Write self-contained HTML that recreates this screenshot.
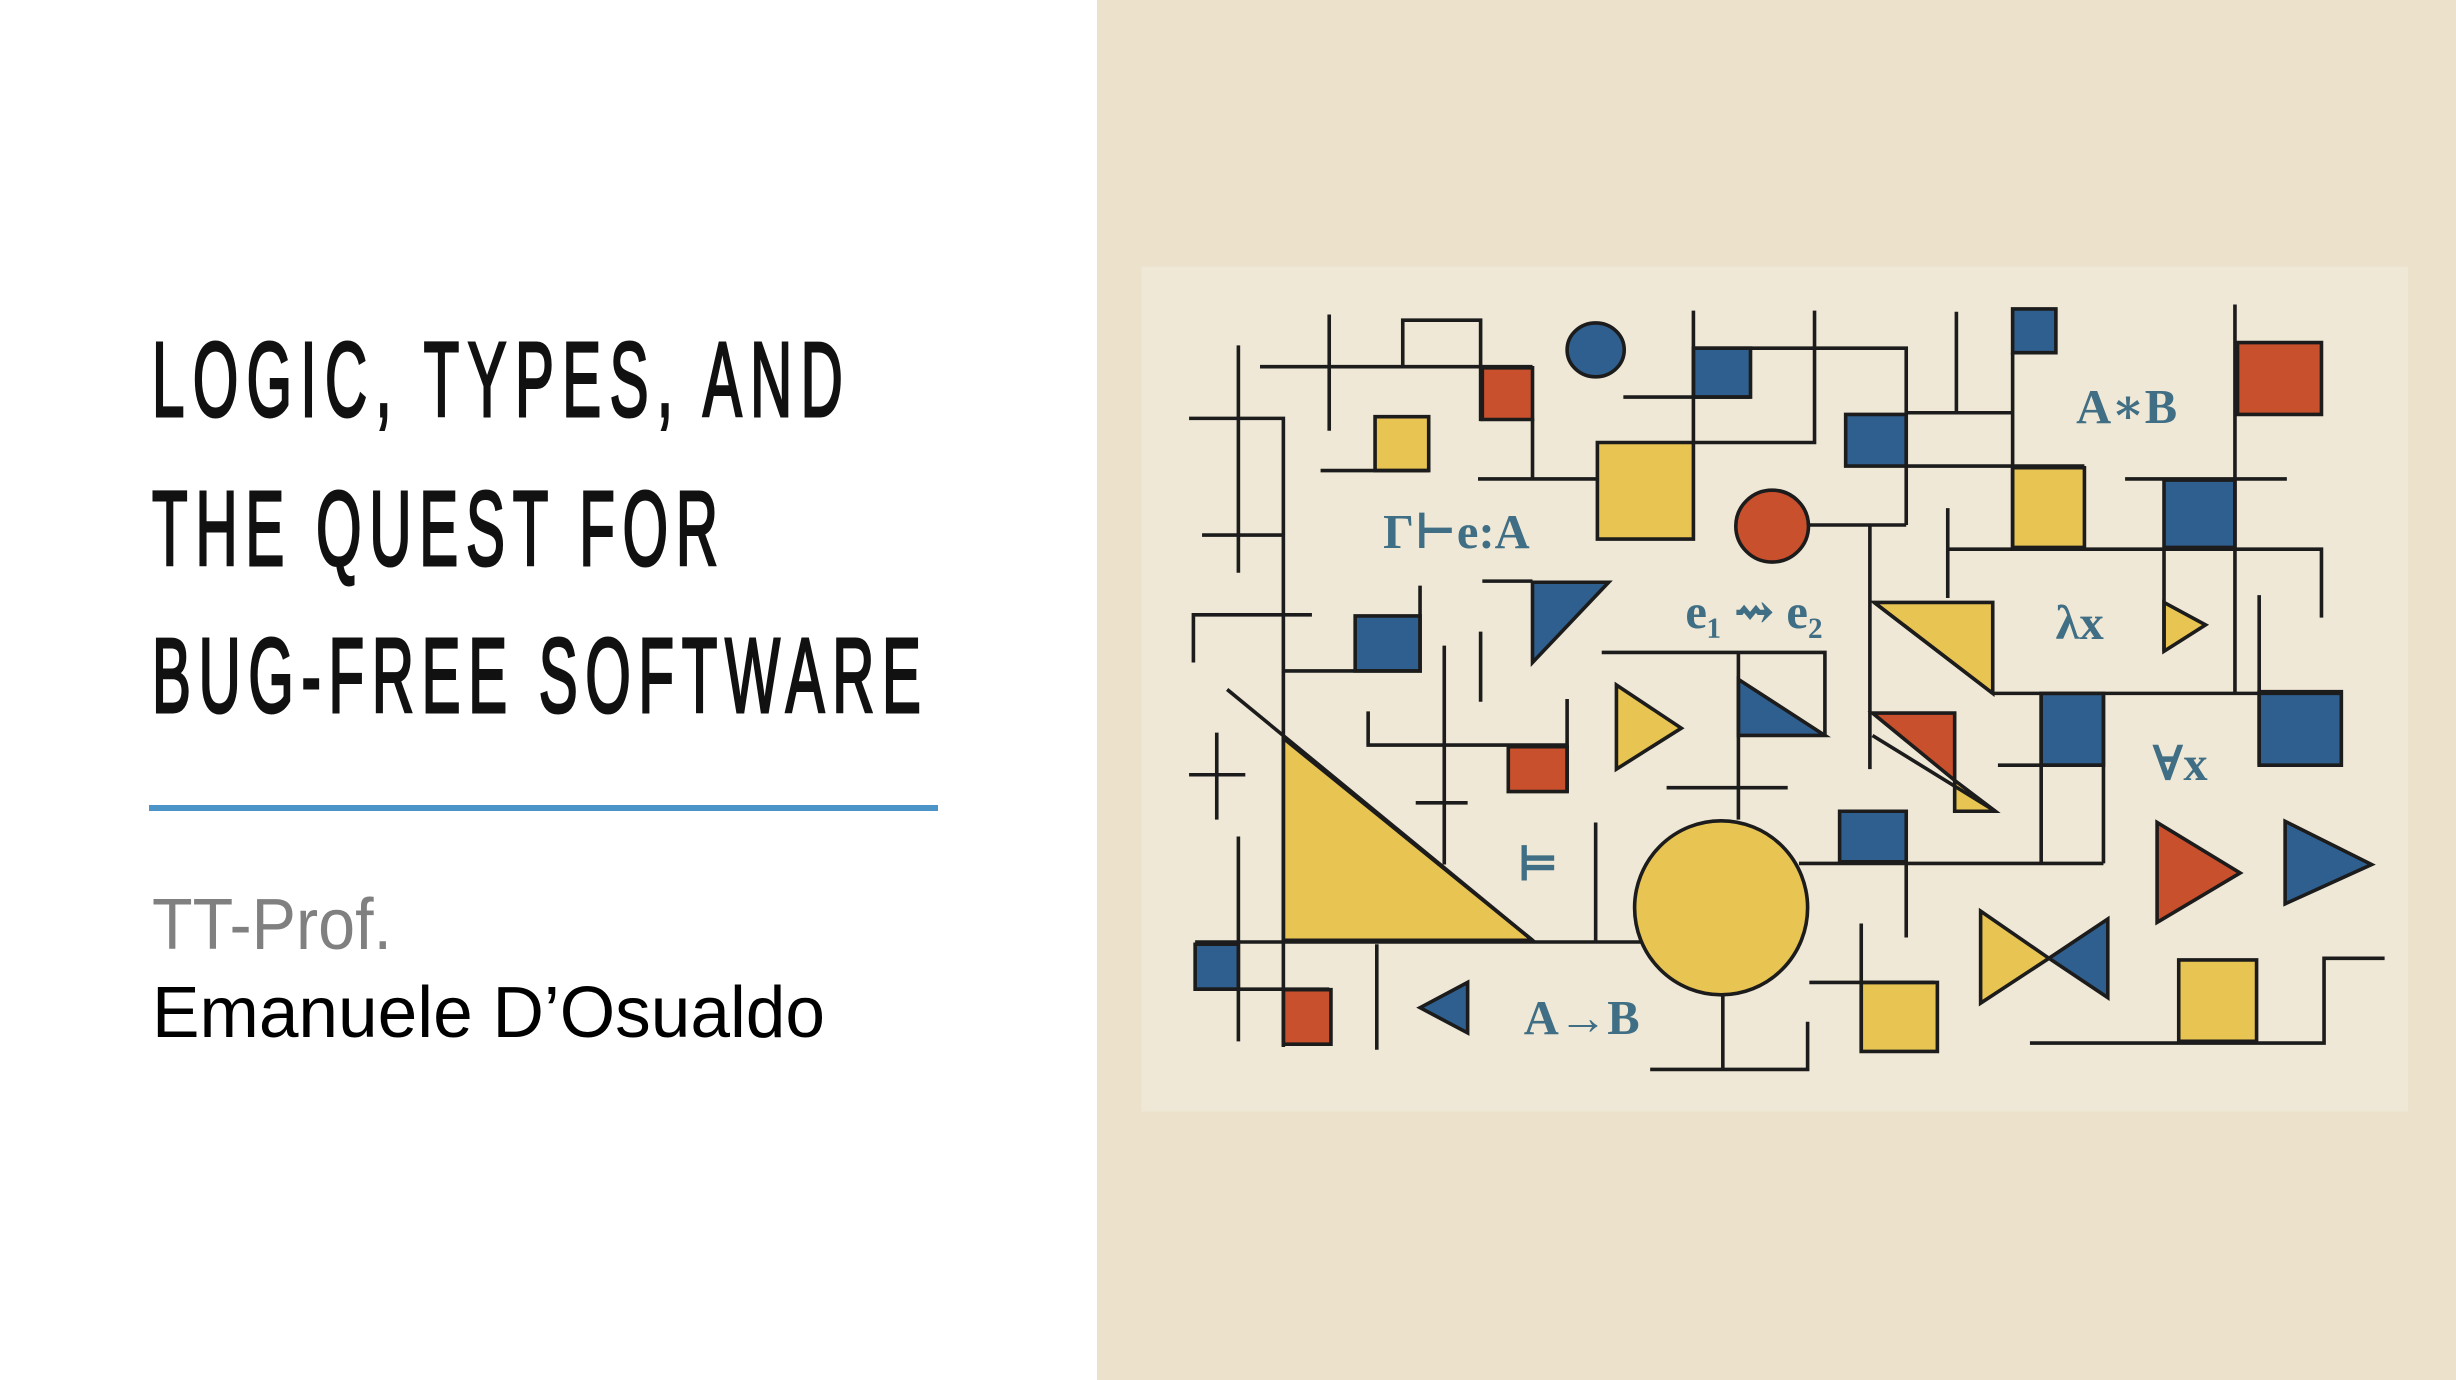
<!DOCTYPE html>
<html><head><meta charset="utf-8"><style>
html,body{margin:0;padding:0;}
body{width:2456px;height:1380px;overflow:hidden;background:#fff;position:relative;}
#right{position:absolute;left:1097px;top:0;width:1359px;height:1380px;background:#ece2cc;}
svg{position:absolute;display:block;}
</style></head><body>
<svg style="left:0;top:0" width="1097" height="1380" viewBox="0 0 1097 1380">
 <g font-family="'Liberation Sans', sans-serif" fill="#111" stroke="#111" stroke-width="3" font-size="106">
  <g transform="translate(152,416) scale(0.55,1)"><text x="0" y="0" textLength="1256" lengthAdjust="spacing">LOGIC, TYPES, AND</text></g>
  <g transform="translate(152,565) scale(0.55,1)"><text x="0" y="0" textLength="1029" lengthAdjust="spacing">THE QUEST FOR</text></g>
  <g transform="translate(152,712) scale(0.55,1)"><text x="0" y="0" textLength="1398" lengthAdjust="spacing">BUG-FREE SOFTWARE</text></g>
 </g>
 <rect x="149" y="805" width="789" height="6" fill="#4a94c8"/>
 <text x="152" y="949" font-family="'Liberation Sans', sans-serif" font-size="72" fill="#808080" textLength="240" lengthAdjust="spacingAndGlyphs">TT-Prof.</text>
 <text x="152" y="1037" font-family="'Liberation Sans', sans-serif" font-size="72" fill="#000" textLength="673" lengthAdjust="spacingAndGlyphs">Emanuele D’Osualdo</text>
</svg>
<div id="right"></div>
<svg style="left:1097px;top:0" width="1359" height="1380" viewBox="700.5 0 867.8 881" preserveAspectRatio="none">
<g transform="translate(702.4,159.6) scale(0.5524,0.3583)" stroke="#1c1c1c" stroke-width="3.6" vector-effect="non-scaling-stroke">
 <rect x="48" y="30" width="1464" height="1505" fill="#f0e8d6" stroke="none"/>
 <g fill="#e8c453" stroke="#1c1c1c">
  <rect x="318" y="297" width="62" height="96" vector-effect="non-scaling-stroke"/>
  <rect x="575" y="343" width="111" height="172" vector-effect="non-scaling-stroke"/>
  <rect x="1055" y="388" width="83" height="142" vector-effect="non-scaling-stroke"/>
  <polygon points="1230,628 1278,668 1230,715" vector-effect="non-scaling-stroke"/>
  <polygon points="597,775 672,852 597,925" vector-effect="non-scaling-stroke"/>
  <polygon points="212,870 500,1230 212,1230" vector-effect="non-scaling-stroke"/>
  <polygon points="895,628 1032,628 1032,790" vector-effect="non-scaling-stroke"/>
  <polygon points="988,945 1035,1000 988,1000" vector-effect="non-scaling-stroke"/>
  <ellipse cx="718" cy="1172" rx="100" ry="155" vector-effect="non-scaling-stroke"/>
  <polygon points="1018,1178 1097,1262 1018,1342" vector-effect="non-scaling-stroke"/>
  <rect x="880" y="1305" width="88" height="123" vector-effect="non-scaling-stroke"/>
  <rect x="1247" y="1265" width="90" height="145" vector-effect="non-scaling-stroke"/>
 </g>
 <g fill="#c8502c" stroke="#1c1c1c">
  <rect x="442" y="210" width="58" height="92" vector-effect="non-scaling-stroke"/>
  <rect x="1315" y="165" width="97" height="128" vector-effect="non-scaling-stroke"/>
  <ellipse cx="777" cy="492" rx="42" ry="64" vector-effect="non-scaling-stroke"/>
  <rect x="472" y="885" width="68" height="80" vector-effect="non-scaling-stroke"/>
  <polygon points="893,825 988,825 988,945" vector-effect="non-scaling-stroke"/>
  <rect x="212" y="1318" width="55" height="97" vector-effect="non-scaling-stroke"/>
  <polygon points="1222,1020 1318,1110 1222,1198" vector-effect="non-scaling-stroke"/>
 </g>
 <g fill="#2f5f8e" stroke="#1c1c1c">
  <ellipse cx="573" cy="178" rx="33" ry="48" vector-effect="non-scaling-stroke"/>
  <rect x="686" y="175" width="66" height="87" vector-effect="non-scaling-stroke"/>
  <rect x="1055" y="105" width="50" height="78" vector-effect="non-scaling-stroke"/>
  <rect x="862" y="293" width="70" height="92" vector-effect="non-scaling-stroke"/>
  <rect x="1230" y="410" width="82" height="120" vector-effect="non-scaling-stroke"/>
  <rect x="295" y="652" width="75" height="98" vector-effect="non-scaling-stroke"/>
  <polygon points="500,592 588,592 500,735" vector-effect="non-scaling-stroke"/>
  <polygon points="738,765 838,865 738,865" vector-effect="non-scaling-stroke"/>
  <rect x="1088" y="790" width="72" height="128" vector-effect="non-scaling-stroke"/>
  <rect x="1340" y="787" width="95" height="131" vector-effect="non-scaling-stroke"/>
  <rect x="855" y="1000" width="77" height="90" vector-effect="non-scaling-stroke"/>
  <polygon points="1370,1018 1470,1095 1370,1165" vector-effect="non-scaling-stroke"/>
  <polygon points="1165,1192 1097,1262 1165,1332" vector-effect="non-scaling-stroke"/>
  <rect x="110" y="1237" width="50" height="80" vector-effect="non-scaling-stroke"/>
  <polygon points="370,1350 425,1305 425,1395" vector-effect="non-scaling-stroke"/>
 </g>
 <path fill="none" vector-effect="non-scaling-stroke" d="
 M265 115V322 M185 208H500 M350 208V125H440V305 M160 170V575 M103 300H212V1420 M118 508H212
 M255 393H380 M500 300V408 M437 408H575 M686 108V343H826V108 M605 262H752 M686 175H932V490 M820 490H932
 M990 110V290 M1055 183V530 M932 290H1055 M932 385H1138 M890 490V925 M980 460V620 M980 533H1412V655
 M1312 97V790 M1185 408H1372 M1230 530V715 M108 735V650H245 M212 750H370V598 M442 590H500
 M440 680V805 M398 705V1095 M580 717H838V865 M738 717V1015 M310 822V882H540 M540 800V965 M365 985H425
 M147 783L500 1230 M135 860V1015 M103 935H168 M160 1045V1410 M110 1233H625 M110 1317H265 M320 1237V1425
 M573 1020V1233 M655 958H795 M720 1327V1460 M636 1460H818V1375 M808 1093H1160 M1088 790V1093 M1160 790V1093
 M1038 918H1160 M1032 790H1435 M1340 615V918 M895 628L1032 790 M893 865L1035 1000 M932 1090V1225
 M880 1200V1430 M820 1305H965 M1075 1413H1415V1262H1485"/>
</g>
<g font-family="'Liberation Serif', 'DejaVu Serif', serif" fill="#3f6e85" font-size="31" font-weight="bold" text-anchor="middle">
 <text x="930" y="350">Γ⊢e:A</text>
 <text x="1358" y="270">A∗B</text>
 <text x="1120" y="401">e₁ ⇝ e₂</text>
 <text x="1328" y="408">λx</text>
 <text x="1392" y="498">∀x</text>
 <text x="982" y="562">⊨</text>
 <text x="1010" y="660">A→B</text>
</g>
</svg>
</body></html>
